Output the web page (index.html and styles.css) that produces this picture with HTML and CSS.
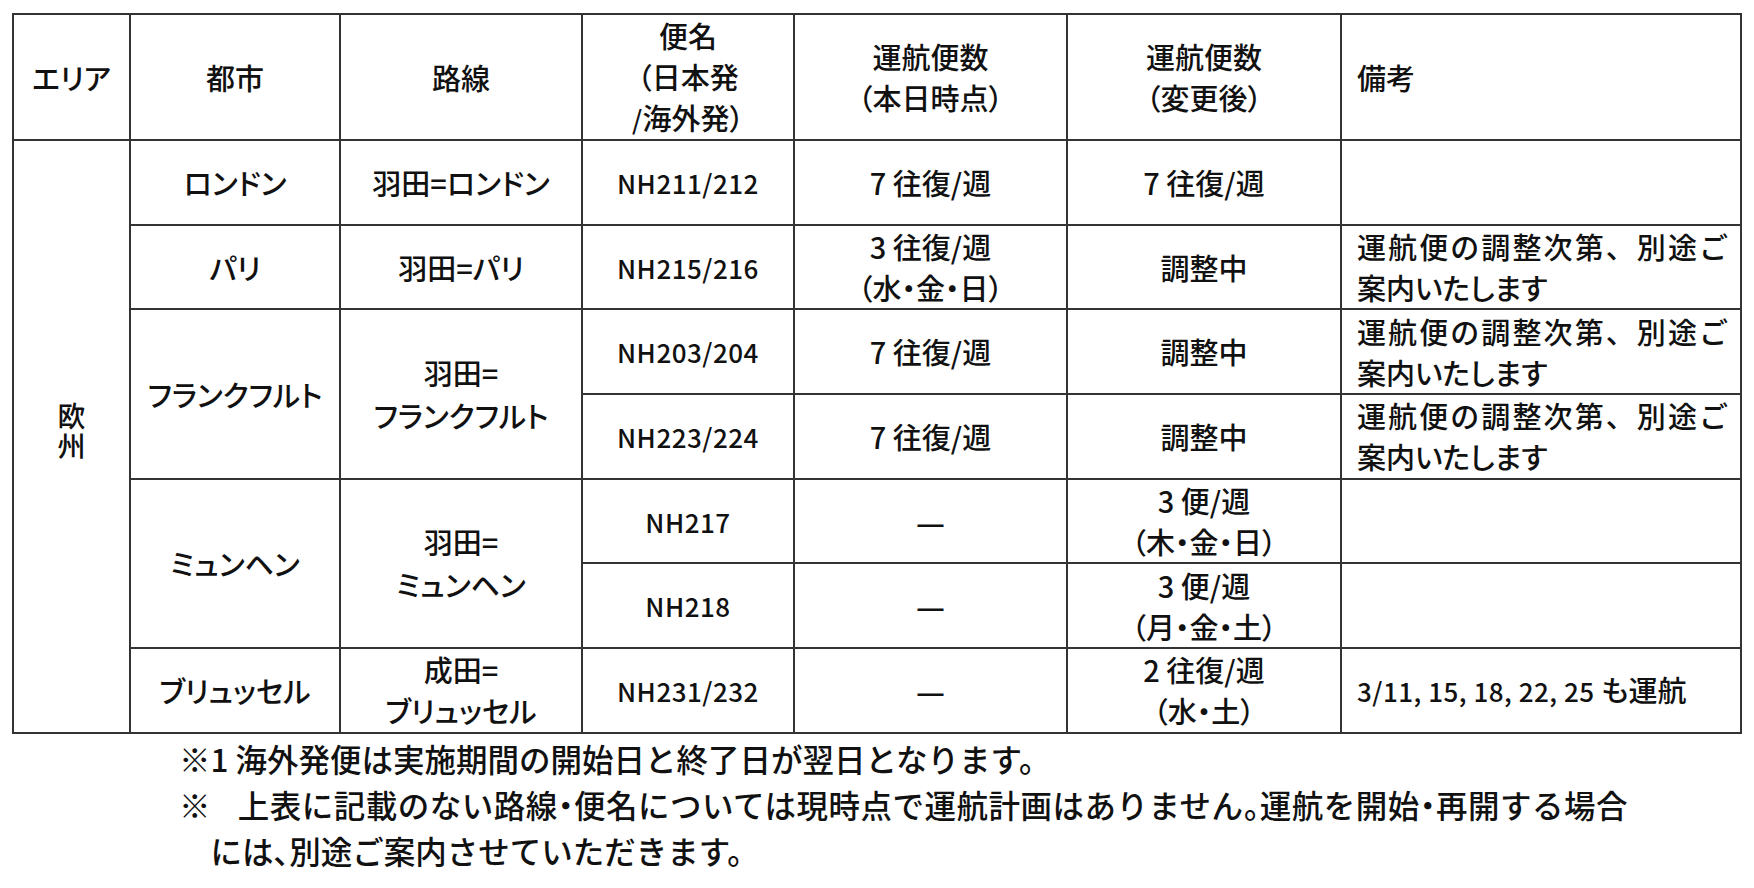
FILE: index.html
```html
<!DOCTYPE html>
<html lang="ja">
<head>
<meta charset="utf-8">
<title>運航便数</title>
<link rel="stylesheet" href="styles.css">
</head>
<body>
<div class="page">
  <table class="flights">
    <colgroup>
      <col class="c-area">
      <col class="c-city">
      <col class="c-route">
      <col class="c-flight">
      <col class="c-now">
      <col class="c-after">
      <col class="c-note">
    </colgroup>
    <thead>
      <tr class="head">
        <th>エリア</th>
        <th>都市</th>
        <th>路線</th>
        <th>便名<br>（日本発<br><span class="num">/</span>海外発）</th>
        <th>運航便数<br>（本日時点）</th>
        <th>運航便数<br>（変更後）</th>
        <th class="left">備考</th>
      </tr>
    </thead>
    <tbody>
      <tr>
        <td rowspan="7" class="area"><span class="vert">欧州</span></td>
        <td>ロンドン</td>
        <td>羽田=ロンドン</td>
        <td class="num">NH211/212</td>
        <td>7 往復/週</td>
        <td>7 往復/週</td>
        <td class="left"></td>
      </tr>
      <tr>
        <td>パリ</td>
        <td>羽田=パリ</td>
        <td class="num">NH215/216</td>
        <td>3 往復/週<br>（水・金・日）</td>
        <td>調整中</td>
        <td class="left"><span class="jl">運航便の調整次第、別途ご</span>案内いたします</td>
      </tr>
      <tr>
        <td rowspan="2">フランクフルト</td>
        <td rowspan="2" class="tall">羽田=<br>フランクフルト</td>
        <td class="num">NH203/204</td>
        <td>7 往復/週</td>
        <td>調整中</td>
        <td class="left"><span class="jl">運航便の調整次第、別途ご</span>案内いたします</td>
      </tr>
      <tr>
        <td class="num">NH223/224</td>
        <td>7 往復/週</td>
        <td>調整中</td>
        <td class="left"><span class="jl">運航便の調整次第、別途ご</span>案内いたします</td>
      </tr>
      <tr>
        <td rowspan="2">ミュンヘン</td>
        <td rowspan="2" class="tall">羽田=<br>ミュンヘン</td>
        <td class="num">NH217</td>
        <td class="dash">―</td>
        <td>3 便/週<br>（木・金・日）</td>
        <td class="left"></td>
      </tr>
      <tr>
        <td class="num">NH218</td>
        <td class="dash">―</td>
        <td>3 便/週<br>（月・金・土）</td>
        <td class="left"></td>
      </tr>
      <tr>
        <td>ブリュッセル</td>
        <td>成田=<br>ブリュッセル</td>
        <td class="num">NH231/232</td>
        <td class="dash">―</td>
        <td>2 往復/週<br>（水・土）</td>
        <td class="left"><span class="num">3/11, 15, 18, 22, 25</span> も運航</td>
      </tr>
    </tbody>
  </table>
  <div class="notes">
    <p class="line">※1 海外発便は実施期間の開始日と終了日が翌日となります。</p>
    <p class="line wide">※<span class="gap"></span>上表に記載のない路線<span class="dot">・</span>便名については現時点で運航計画はありません<span class="dot">。</span>運航を開始<span class="dot">・</span>再開する場合</p>
    <p class="line cont">には<span class="dot">、</span>別途ご案内させていただきます。</p>
  </div>
</div>
</body>
</html>
```

FILE: styles.css
```css
html, body {
  margin: 0;
  padding: 0;
  background: #ffffff;
}

body {
  font-family: "Noto Sans CJK JP", "Noto Sans", sans-serif;
  color: #111111;
}

.page {
  padding: 13px 0 0 12px;
}

.flights {
  border-collapse: collapse;
  table-layout: fixed;
  width: 1728px;
  font-size: 29px;
  line-height: 41px;
  font-weight: 500;
  font-feature-settings: "palt";
}

.c-area { width: 117px; }
.c-city { width: 210px; }
.c-route { width: 242px; }
.c-flight { width: 212px; }
.c-now { width: 273px; }
.c-after { width: 274px; }
.c-note { width: 400px; }

.flights th,
.flights td {
  border: 2px solid #333333;
  padding: 0;
  text-align: center;
  vertical-align: middle;
  font-weight: 500;
}

.flights .head {
  height: 126px;
}

.flights tbody tr {
  height: 84.7px;
}

.flights .left {
  text-align: left;
  padding-left: 15px;
  padding-right: 12px;
}

.jl {
  display: block;
  text-align: justify;
  text-align-last: justify;
  font-feature-settings: normal;
}

.tall {
  line-height: 43px;
}

.area .vert {
  display: inline-block;
  writing-mode: vertical-rl;
  font-size: 28px;
  line-height: 30px;
  letter-spacing: 2px;
  font-feature-settings: normal;
}

.flights .dash {
  padding-top: 6px;
  -webkit-text-stroke: 1.2px #111111;
}

.num {
  font-size: 26px;
  letter-spacing: 0.5px;
}

.notes {
  margin: 1px 0 0 167px;
  font-size: 31.5px;
  line-height: 46px;
  font-weight: 500;
}

.line {
  margin: 0;
  white-space: nowrap;
}

.line.wide {
  letter-spacing: 0.5px;
}

.line.cont {
  padding-left: 1em;
}

.gap {
  display: inline-block;
  width: 0.85em;
}

.dot {
  font-feature-settings: "palt";
}
```
